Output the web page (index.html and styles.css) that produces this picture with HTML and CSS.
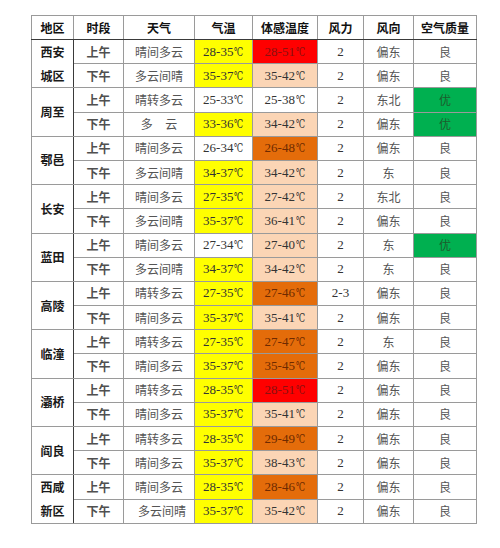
FILE: index.html
```html
<!DOCTYPE html>
<html lang="zh-CN">
<head>
<meta charset="utf-8">
<title>天气预报</title>
<link rel="stylesheet" href="styles.css">
</head>
<body>
<table class="wx">
  <colgroup>
    <col class="c1"><col class="c2"><col class="c3"><col class="c4"><col class="c5"><col class="c6"><col class="c7"><col class="c8">
  </colgroup>
  <thead>
    <tr><th>地区</th><th>时段</th><th>天气</th><th>气温</th><th>体感温度</th><th>风力</th><th>风向</th><th>空气质量</th></tr>
  </thead>
  <tbody>
    <tr class="g"><td class="area split">西安</td><td class="t">上午</td><td>晴间多云</td><td class="num y">28-35<span class="deg">℃</span></td><td class="num r">28-51<span class="deg">℃</span></td><td class="num">2</td><td>偏东</td><td>良</td></tr>
    <tr><td class="area split">城区</td><td class="t">下午</td><td>多云间晴</td><td class="num y">35-37<span class="deg">℃</span></td><td class="num p">35-42<span class="deg">℃</span></td><td class="num">2</td><td>偏东</td><td>良</td></tr>

    <tr class="g"><td class="area" rowspan="2">周至</td><td class="t">上午</td><td>晴转多云</td><td class="num">25-33<span class="deg">℃</span></td><td class="num">25-38<span class="deg">℃</span></td><td class="num">2</td><td>东北</td><td class="gr">优</td></tr>
    <tr><td class="t">下午</td><td class="sp">多 云</td><td class="num y">33-36<span class="deg">℃</span></td><td class="num p">34-42<span class="deg">℃</span></td><td class="num">2</td><td>偏东</td><td class="gr">优</td></tr>

    <tr class="g"><td class="area" rowspan="2">鄠邑</td><td class="t">上午</td><td>晴间多云</td><td class="num">26-34<span class="deg">℃</span></td><td class="num o">26-48<span class="deg">℃</span></td><td class="num">2</td><td>偏东</td><td>良</td></tr>
    <tr><td class="t">下午</td><td>多云间晴</td><td class="num y">34-37<span class="deg">℃</span></td><td class="num p">34-42<span class="deg">℃</span></td><td class="num">2</td><td>东</td><td>良</td></tr>

    <tr class="g"><td class="area" rowspan="2">长安</td><td class="t">上午</td><td>晴间多云</td><td class="num y">27-35<span class="deg">℃</span></td><td class="num p">27-42<span class="deg">℃</span></td><td class="num">2</td><td>东北</td><td>良</td></tr>
    <tr><td class="t">下午</td><td>多云间晴</td><td class="num y">35-37<span class="deg">℃</span></td><td class="num p">36-41<span class="deg">℃</span></td><td class="num">2</td><td>偏东</td><td>良</td></tr>

    <tr class="g"><td class="area" rowspan="2">蓝田</td><td class="t">上午</td><td>晴间多云</td><td class="num">27-34<span class="deg">℃</span></td><td class="num p">27-40<span class="deg">℃</span></td><td class="num">2</td><td>东</td><td class="gr">优</td></tr>
    <tr><td class="t">下午</td><td>多云间晴</td><td class="num y">34-37<span class="deg">℃</span></td><td class="num p">34-42<span class="deg">℃</span></td><td class="num">2</td><td>东</td><td>良</td></tr>

    <tr class="g"><td class="area" rowspan="2">高陵</td><td class="t">上午</td><td>晴转多云</td><td class="num y">27-35<span class="deg">℃</span></td><td class="num o">27-46<span class="deg">℃</span></td><td class="num">2-3</td><td>偏东</td><td>良</td></tr>
    <tr><td class="t">下午</td><td>晴间多云</td><td class="num y">35-37<span class="deg">℃</span></td><td class="num p">35-41<span class="deg">℃</span></td><td class="num">2</td><td>偏东</td><td>良</td></tr>

    <tr class="g"><td class="area" rowspan="2">临潼</td><td class="t">上午</td><td>晴转多云</td><td class="num y">27-35<span class="deg">℃</span></td><td class="num o">27-47<span class="deg">℃</span></td><td class="num">2</td><td>东</td><td>良</td></tr>
    <tr><td class="t">下午</td><td>晴间多云</td><td class="num y">35-37<span class="deg">℃</span></td><td class="num o">35-45<span class="deg">℃</span></td><td class="num">2</td><td>偏东</td><td>良</td></tr>

    <tr class="g"><td class="area" rowspan="2">灞桥</td><td class="t">上午</td><td>晴转多云</td><td class="num y">28-35<span class="deg">℃</span></td><td class="num r">28-51<span class="deg">℃</span></td><td class="num">2</td><td>偏东</td><td>良</td></tr>
    <tr><td class="t">下午</td><td>晴间多云</td><td class="num y">35-37<span class="deg">℃</span></td><td class="num p">35-41<span class="deg">℃</span></td><td class="num">2</td><td>偏东</td><td>良</td></tr>

    <tr class="g"><td class="area" rowspan="2">阎良</td><td class="t">上午</td><td>晴转多云</td><td class="num y">28-35<span class="deg">℃</span></td><td class="num o">29-49<span class="deg">℃</span></td><td class="num">2</td><td>偏东</td><td>良</td></tr>
    <tr><td class="t">下午</td><td>晴间多云</td><td class="num y">35-37<span class="deg">℃</span></td><td class="num p">38-43<span class="deg">℃</span></td><td class="num">2</td><td>偏东</td><td>良</td></tr>

    <tr class="g"><td class="area split">西咸</td><td class="t">上午</td><td>晴间多云</td><td class="num y">28-35<span class="deg">℃</span></td><td class="num o">28-46<span class="deg">℃</span></td><td class="num">2</td><td>偏东</td><td>良</td></tr>
    <tr><td class="area split">新区</td><td class="t">下午</td><td class="shift">多云间晴</td><td class="num y">35-37<span class="deg">℃</span></td><td class="num p">35-42<span class="deg">℃</span></td><td class="num">2</td><td>偏东</td><td>良</td></tr>
  </tbody>
</table>
</body>
</html>
```

FILE: styles.css
```css
html, body {
  margin: 0;
  padding: 0;
  background: #ffffff;
}

body {
  padding: 15px 0 0 31px;
}

.wx {
  border-collapse: collapse;
  table-layout: fixed;
  width: 445px;
  border: 1px solid #3a3a3a;
  font-family: "Noto Sans CJK SC", sans-serif;
  font-size: 12px;
  color: #555555;
}

.c1 { width: 42px; }
.c2 { width: 50px; }
.c3 { width: 71px; }
.c4 { width: 58px; }
.c5 { width: 65px; }
.c6 { width: 46px; }
.c7 { width: 50px; }
.c8 { width: 63px; }

.wx th,
.wx td {
  padding: 0;
  text-align: center;
  vertical-align: middle;
  border: 1px solid #9a9a9a;
  line-height: 16px;
}

.wx thead tr {
  height: 24px;
}

.wx th {
  color: #111111;
  font-weight: 700;
  border-bottom-color: #3a3a3a;
}

.wx tbody tr {
  height: 24.2px;
}

.wx tr.g td {
  border-top-color: #3a3a3a;
}

.wx td.area {
  color: #1a1a1a;
  font-weight: 700;
  border-right-color: #3a3a3a;
}

.wx tr.g td.split {
  border-bottom-color: transparent;
}

.wx td.t {
  color: #505050;
  font-weight: 700;
}

.wx td.sp {
  word-spacing: 10px;
}

.wx td.shift {
  padding-left: 6px;
}

.wx td.num {
  font-family: "Liberation Serif", "DejaVu Serif", "Noto Sans CJK SC", serif;
  font-size: 13px;
  color: #333333;
}

.wx .deg {
  display: inline-block;
  font-family: "DejaVu Serif", serif;
  font-size: 12px;
  transform: scaleX(0.68);
  transform-origin: 0 50%;
  margin-right: -4px;
  margin-left: 1px;
}

.wx td.y { background: #ffff00; }
.wx td.r { background: #ff0000; color: #8a1010; }
.wx td.o { background: #e46c0a; color: #6e2a00; }
.wx td.p { background: #fbd5b5; }
.wx td.gr { background: #00b050; color: #1d5c2c; }
```
